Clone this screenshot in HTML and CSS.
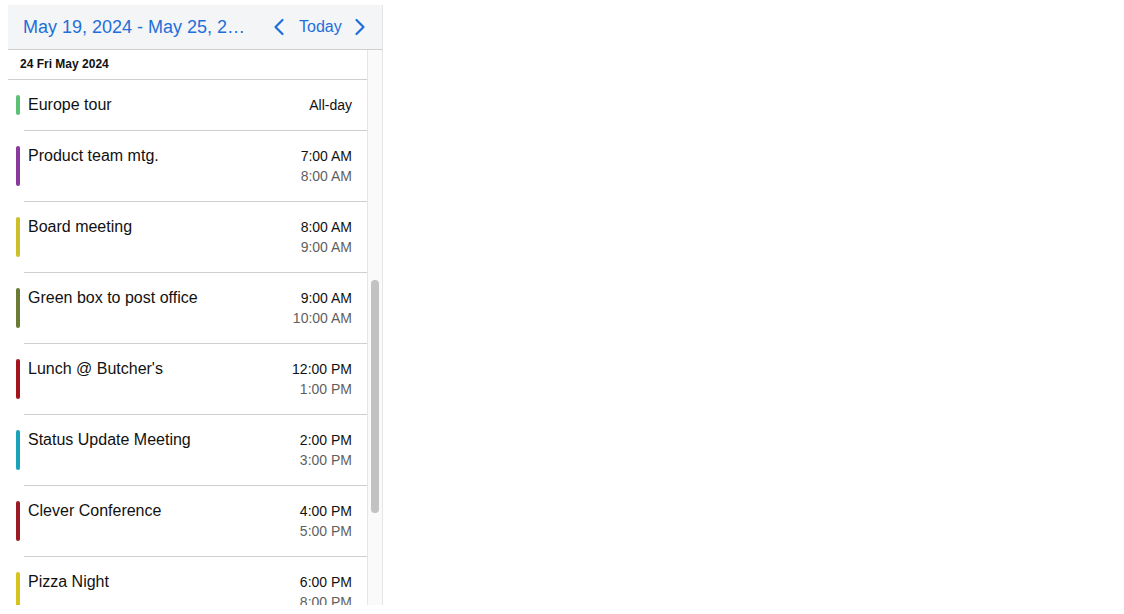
FILE: index.html
```html
<!DOCTYPE html>
<html>
<head>
<meta charset="utf-8">
<link rel="stylesheet" href="styles.css">
</head>
<body>
<div class="panel">
  <div class="header">
    <div class="title">May 19, 2024 - May 25, 2024</div>
    <div class="nav">
      <svg class="chev" width="12" height="18" viewBox="0 0 12 18"><path d="M9.5 2 L2.5 9 L9.5 16" fill="none" stroke="currentColor" stroke-width="2.2" stroke-linecap="round" stroke-linejoin="round"/></svg>
      <span class="today">Today</span>
      <svg class="chev" width="12" height="18" viewBox="0 0 12 18"><path d="M2.5 2 L9.5 9 L2.5 16" fill="none" stroke="currentColor" stroke-width="2.2" stroke-linecap="round" stroke-linejoin="round"/></svg>
    </div>
  </div>
  <div class="body">
    <div class="list">
      <div class="day">24 Fri May 2024</div>
      <div class="row allday">
        <div class="bar" style="background:#5cc175"></div>
        <div class="main">
          <div class="name">Europe tour</div>
          <div class="times"><div class="start">All-day</div></div>
        </div>
      </div>
      <div class="row">
        <div class="bar" style="background:#8a3a9c"></div>
        <div class="main">
          <div class="name">Product team mtg.</div>
          <div class="times"><div class="start">7:00 AM</div><div class="end">8:00 AM</div></div>
        </div>
      </div>
      <div class="row">
        <div class="bar" style="background:#cdbf2c"></div>
        <div class="main">
          <div class="name">Board meeting</div>
          <div class="times"><div class="start">8:00 AM</div><div class="end">9:00 AM</div></div>
        </div>
      </div>
      <div class="row">
        <div class="bar" style="background:#6b7a35"></div>
        <div class="main">
          <div class="name">Green box to post office</div>
          <div class="times"><div class="start">9:00 AM</div><div class="end">10:00 AM</div></div>
        </div>
      </div>
      <div class="row">
        <div class="bar" style="background:#a3141d"></div>
        <div class="main">
          <div class="name">Lunch @ Butcher's</div>
          <div class="times"><div class="start">12:00 PM</div><div class="end">1:00 PM</div></div>
        </div>
      </div>
      <div class="row">
        <div class="bar" style="background:#1aa2b9"></div>
        <div class="main">
          <div class="name">Status Update Meeting</div>
          <div class="times"><div class="start">2:00 PM</div><div class="end">3:00 PM</div></div>
        </div>
      </div>
      <div class="row">
        <div class="bar" style="background:#9c1a24"></div>
        <div class="main">
          <div class="name">Clever Conference</div>
          <div class="times"><div class="start">4:00 PM</div><div class="end">5:00 PM</div></div>
        </div>
      </div>
      <div class="row">
        <div class="bar" style="background:#d6c31f"></div>
        <div class="main">
          <div class="name">Pizza Night</div>
          <div class="times"><div class="start">6:00 PM</div><div class="end">8:00 PM</div></div>
        </div>
      </div>
    </div>
    <div class="track"><div class="thumb"></div></div>
  </div>
</div>
</body>
</html>
```
FILE: styles.css
```css
html, body {
  margin: 0;
  padding: 0;
  background: #fff;
}
body {
  padding: 5px 0 0 8px;
  font-family: "Liberation Sans", Arial, sans-serif;
  color: #111;
}
.panel {
  width: 375px;
  height: 600px;
  display: flex;
  flex-direction: column;
  overflow: hidden;
  background: #fff;
}
.header {
  height: 44px;
  flex: none;
  display: flex;
  align-items: center;
  background: #f4f5f7;
  border-bottom: 1px solid #cfcfd2;
  border-right: 1px solid #e6e6e8;
  padding-left: 15px;
  color: #1e6fd9;
}
.title {
  font-size: 18px;
  width: 227px;
  white-space: nowrap;
  overflow: hidden;
  text-overflow: ellipsis;
}
.nav {
  display: flex;
  align-items: center;
  margin-left: 23px;
}
.chev {
  display: block;
}
.today {
  font-size: 16px;
  margin: 0 12px 0 14px;
}
.body {
  flex: 1;
  display: flex;
  min-height: 0;
}
.list {
  flex: 1;
  overflow: hidden;
}
.day {
  border-bottom: 1px solid #cfcfd2;
  font-size: 12px;
  font-weight: bold;
  padding: 0 0 1px 12px;
  box-sizing: border-box;
  height: 30px;
  display: flex;
  align-items: center;
  color: #111;
}
.row {
  display: flex;
  padding-left: 8px;
}
.bar {
  width: 4px;
  height: 40px;
  margin-top: 15px;
  border-radius: 2px;
  flex: none;
}
.main {
  flex: 1;
  margin-left: 4px;
  border-bottom: 1px solid #cfcfd2;
  display: flex;
  justify-content: space-between;
  align-items: flex-start;
  padding: 15px 15px 0 4px;
  box-sizing: border-box;
  height: 71px;
}
.name {
  font-size: 16px;
  line-height: 20px;
  color: #111;
}
.times {
  text-align: right;
  font-size: 14px;
  line-height: 20px;
}
.start {
  color: #111;
}
.end {
  color: #5f5f5f;
}
.allday .bar {
  height: 20px;
}
.allday .main {
  height: 51px;
  padding-top: 0;
  align-items: center;
}
.track {
  width: 14px;
  flex: none;
  background: #fafafa;
  border-left: 1px solid #e6e6e6;
  border-right: 1px solid #e6e6e8;
}
.thumb {
  width: 8px;
  height: 233px;
  margin: 230px 0 0 3px;
  border-radius: 4px;
  background: #c2c2c2;
}
```
